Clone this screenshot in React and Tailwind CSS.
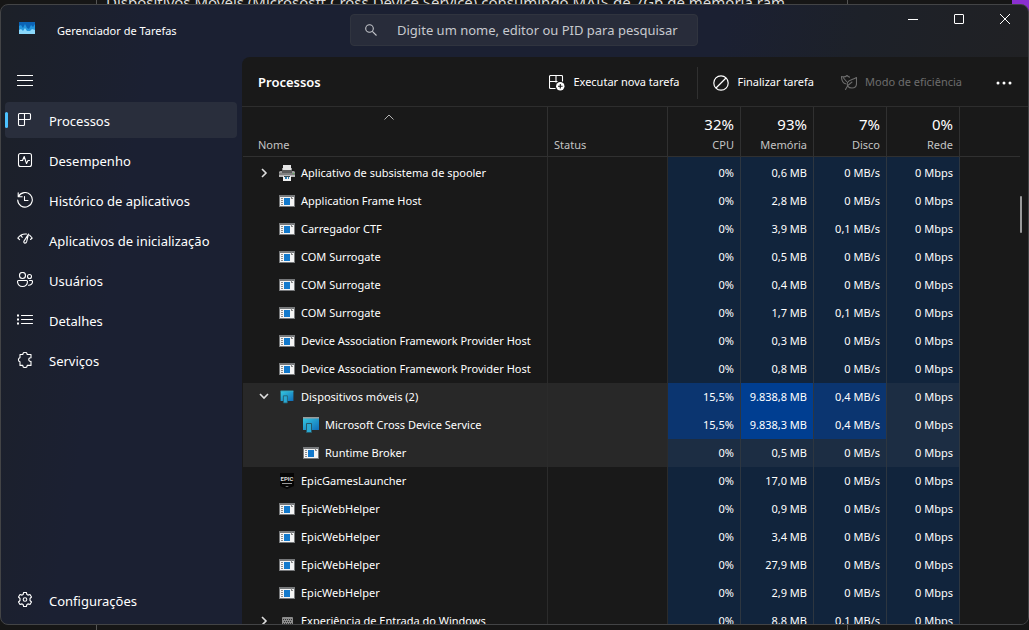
import React, { useState } from "react";

const heat = {
  idle: "bg-[#11243c]",
  idleHover: "bg-[#1c2d43]",
  mid: "bg-[#0b3570]",
  high: "bg-[#003e91]",
};

const initialProcesses = [
  { name: "Aplicativo de subsistema de spooler", icon: "printer", arrow: "right", cpu: "0%", memory: "0,6 MB", disk: "0 MB/s" },
  { name: "Application Frame Host", icon: "window", cpu: "0%", memory: "2,8 MB", disk: "0 MB/s" },
  { name: "Carregador CTF", icon: "window", cpu: "0%", memory: "3,9 MB", disk: "0,1 MB/s" },
  { name: "COM Surrogate", icon: "window", cpu: "0%", memory: "0,5 MB", disk: "0 MB/s" },
  { name: "COM Surrogate", icon: "window", cpu: "0%", memory: "0,4 MB", disk: "0 MB/s" },
  { name: "COM Surrogate", icon: "window", cpu: "0%", memory: "1,7 MB", disk: "0,1 MB/s" },
  { name: "Device Association Framework Provider Host", icon: "window", cpu: "0%", memory: "0,3 MB", disk: "0 MB/s" },
  { name: "Device Association Framework Provider Host", icon: "window", cpu: "0%", memory: "0,8 MB", disk: "0 MB/s" },
  { name: "Dispositivos móveis (2)", icon: "devicesSmall", arrow: "down", active: true, busy: true, cpu: "15,5%", memory: "9.838,8 MB", disk: "0,4 MB/s" },
  { name: "Microsoft Cross Device Service", icon: "devices", child: true, active: true, busy: true, cpu: "15,5%", memory: "9.838,3 MB", disk: "0,4 MB/s" },
  { name: "Runtime Broker", icon: "window", child: true, active: true, cpu: "0%", memory: "0,5 MB", disk: "0 MB/s" },
  { name: "EpicGamesLauncher", icon: "epic", cpu: "0%", memory: "17,0 MB", disk: "0 MB/s" },
  { name: "EpicWebHelper", icon: "window", cpu: "0%", memory: "0,9 MB", disk: "0 MB/s" },
  { name: "EpicWebHelper", icon: "window", cpu: "0%", memory: "3,4 MB", disk: "0 MB/s" },
  { name: "EpicWebHelper", icon: "window", cpu: "0%", memory: "27,9 MB", disk: "0 MB/s" },
  { name: "EpicWebHelper", icon: "window", cpu: "0%", memory: "2,9 MB", disk: "0 MB/s" },
  { name: "Experiência de Entrada do Windows", icon: "keyboard", arrow: "right", cpu: "0%", memory: "8,8 MB", disk: "0,1 MB/s" },
];

const columns = [
  { label: "CPU", total: "32%" },
  { label: "Memória", total: "93%" },
  { label: "Disco", total: "7%" },
  { label: "Rede", total: "0%" },
];

const LineIcon = ({ children }) => (
  <svg
    className="size-4 shrink-0"
    viewBox="0 0 16 16"
    fill="none"
    stroke="currentColor"
    strokeWidth="1.1"
    strokeLinecap="round"
    strokeLinejoin="round"
    aria-hidden="true"
  >
    {children}
  </svg>
);

const navItems = [
  {
    label: "Processos",
    icon: (
      <LineIcon>
        <path d="M2.5 1.5h10a1 1 0 0 1 1 1v4a1 1 0 0 1-1 1h-11v-5a1 1 0 0 1 1-1zM7.5 1.5v11a1 1 0 0 1-1 1h-4a1 1 0 0 1-1-1v-5" />
      </LineIcon>
    ),
  },
  {
    label: "Desempenho",
    icon: (
      <LineIcon>
        <rect x="1.5" y="1.5" width="13" height="13" rx="2" />
        <path d="M3.5 8.5h2l1.7-4 2.3 7 1.5-3h1.5" />
      </LineIcon>
    ),
  },
  {
    label: "Histórico de aplicativos",
    icon: (
      <LineIcon>
        <path d="M1.2 .8v4h4M1.5 4.5A7.3 7.3 0 1 1 .7 8M7.5 4.5v4H11" />
      </LineIcon>
    ),
  },
  {
    label: "Aplicativos de inicialização",
    icon: (
      <LineIcon>
        <path d="M.8 6a9.5 9.5 0 0 1 8.7-4M.8 6l1.8 1.6M3.8 3.1l1.4 2.2M12.6 3.2l2.6 2.8-1.7 1.5" />
        <path d="M11.5 2.1L7 9.1c-.6 1 .1 2 1 2s1.4-.5 1.6-1.2z" />
      </LineIcon>
    ),
  },
  {
    label: "Usuários",
    icon: (
      <LineIcon>
        <circle cx="5.5" cy="3.5" r="3" />
        <circle cx="12.5" cy="4.5" r="2" />
        <path d="M1.5 8.5h8a1 1 0 0 1 1 1c0 3-2 5-5 5s-5-2-5-5a1 1 0 0 1 1-1zM12.5 8.5h2a1 1 0 0 1 1 1c0 2.5-1.5 3.7-4 3.7" />
      </LineIcon>
    ),
  },
  {
    label: "Detalhes",
    icon: (
      <LineIcon>
        <path d="M4.5 3.5h11M4.5 7.5h11M4.5 11.5h11" />
        <path strokeWidth="1.8" strokeLinecap="butt" d="M0 3.5h2M0 7.5h2M0 11.5h2" />
      </LineIcon>
    ),
  },
  {
    label: "Serviços",
    icon: (
      <LineIcon>
        <path d="M3 2.5h2.8a2.2 2.2 0 0 1 4.4 0H14v3.3c-3-.4-3 4 0 3.6v4h-3.8a2.2 2.2 0 0 1-4.4 0H3V9.8a2.2 2.2 0 0 1 0-4.2z" />
      </LineIcon>
    ),
  },
];

const GearIcon = () => (
  <LineIcon>
    <circle cx="8" cy="7.5" r="1.8" />
    <path d="M6.6.5h2.8l.5 2 1.1.6 2-.6 1.5 2.5L13 6.5v2l1.5 1.5-1.5 2.500-2-.6-1.1.6-.5 2H6.6l-.5-2-1.1-.6-2 .6L1.5 10 3 8.5v-2L1.5 5 3 2.500l2 .6 1.1-.6z" />
  </LineIcon>
);

const ProcessIcon = ({ type }) => {
  if (type === "printer") {
    return (
      <svg className="size-4 shrink-0" viewBox="0 0 16 16" aria-hidden="true">
        <path fill="#e4e4e4" d="M4 0h8v5H4z" />
        <path fill="#9c9c9c" d="M1 6h2V3h1v3h8V3h1v3h2l1 1v5H0V7z" />
        <path fill="#5c5c5c" d="M3 5h10v3H3z" />
        <path fill="#808080" d="M0 8h16v2H0z" />
        <path fill="#b9b9b9" d="M0 10h16v2H0z" />
        <path fill="#f0f0f0" d="M4 11h8v5H4z" />
        <path fill="#2f7fae" d="M6 12h2v2H6zM9 12h1v2H9z" />
        <path fill="#3a4a52" d="M5 11h6v1H5z" />
        <path fill="#58c558" d="M14 8h1v1h-1z" />
      </svg>
    );
  }
  if (type === "devices" || type === "devicesSmall") {
    return (
      <svg className="size-4 shrink-0" viewBox={type === "devices" ? "0 0 16 16" : "-2 -2 20 20"} aria-hidden="true">
        <defs>
          <linearGradient id={type} x1="0" y1="0" x2="1" y2="1">
            <stop offset="0" stopColor="#35c8e0" />
            <stop offset="1" stopColor="#0f6cb8" />
          </linearGradient>
        </defs>
        <path fill={`url(#${type})`} d="M0 1h16v12H0z" />
        <path fill={type === "devices" ? "#9a9a9a" : "#35b8d8"} d="M0 0h16v1.5H0z" />
        <path fill="#2aa9d2" stroke="#275968" d="M3.5 6.5h5v9h-5z" />
      </svg>
    );
  }
  if (type === "epic") {
    return (
      <svg className="size-4 shrink-0" viewBox="0 0 16 16" aria-hidden="true">
        <path fill="#050505" d="M1 0h14v13l-7 3-7-3z" />
        <text x="8" y="8" textAnchor="middle" fill="#ddd" fontSize="6" fontWeight="700" fontFamily="Roboto, sans-serif">
          EPIC
        </text>
        <path fill="#999" d="M3 10h10v1H3zM6 13h4l-2 1z" />
      </svg>
    );
  }
  if (type === "keyboard") {
    return (
      <svg className="size-4 shrink-0" viewBox="0 0 16 16" aria-hidden="true">
        <rect x="3" y="4" width="11" height="8" rx="1" fill="#8c8c8c" />
        <path stroke="#333" strokeDasharray="1 1" d="M4 6.5h9M5 8.5h8M4 10.5h9" />
      </svg>
    );
  }
  return (
    <svg className="size-4 shrink-0" viewBox="0 0 16 16" shapeRendering="crispEdges" aria-hidden="true">
      <path fill="#77797b" d="M0 2h16v12H0z" />
      <path fill="#f4f4f4" d="M1 4h14v9H1z" />
      <path fill="#1279cc" d="M5 5h6v7H5z" />
      <path fill="#8b8b8b" d="M2 5h2v1H2zM2 7h2v1H2zM2 9h2v1H2zM2 11h2v1H2zM12 5h2v1h-2zM12 3h1v2h-1z" />
    </svg>
  );
};

const NavButton = ({ label, icon, selected, onClick }) => (
  <button
    className={`h-9 w-full flex items-center gap-4 pr-3 rounded text-[13px] text-left whitespace-nowrap ${
      selected ? "bg-[#292e3c]" : "hover:bg-white/5"
    }`}
    onClick={onClick}
  >
    <span className="flex items-center gap-[9px]">
      <span className={`w-[3px] h-4 rounded-full ${selected ? "bg-[#4cc2ff]" : ""}`} />
      {icon}
    </span>
    <span className="pt-1">{label}</span>
  </button>
);

const ProcessRow = ({ process, first }) => {
  const idle = process.active ? heat.idleHover : heat.idle;
  const mid = process.busy ? heat.mid : idle;
  const high = process.busy ? heat.high : idle;
  const pad = first ? "h-[30px] pt-0.5" : "h-7";
  const value = `${pad} pr-1.5 border-r border-[#2d3640] text-right`;

  return (
    <tr className="whitespace-nowrap">
      <td className={`${pad} border-r border-[#2b2b2b] ${process.active ? "bg-[#282828]" : ""}`}>
        <div className={`flex items-center ${process.child ? "pl-[60px]" : "pl-[15px]"}`}>
          {!process.child && (
            <span className="w-[21px] flex">
              {process.arrow && (
                <button aria-label={`Expandir ${process.name}`}>
                  <svg className="size-3" viewBox="0 0 12 12" fill="none" stroke="#dedede" strokeWidth="1.6">
                    <path d={process.arrow === "down" ? "M2 3l4 4 4-4" : "M4 2l4 4-4 4"} />
                  </svg>
                </button>
              )}
            </span>
          )}
          <ProcessIcon type={process.icon} />
          <span className="pl-1.5">{process.name}</span>
        </div>
      </td>
      <td className={`border-r border-[#2b2b2b] ${process.active ? "bg-[#282828]" : ""}`}></td>
      <td className={`${value} ${mid}`}>{process.cpu}</td>
      <td className={`${value} ${high}`}>{process.memory}</td>
      <td className={`${value} ${mid}`}>{process.disk}</td>
      <td className={`${value} ${idle}`}>0 Mbps</td>
      <td></td>
    </tr>
  );
};

const App = () => {
  const [selected, setSelected] = useState("Processos");
  const [search, setSearch] = useState("");

  const term = search.toLowerCase();
  const processes = initialProcesses.filter((p) => p.name.toLowerCase().includes(term));

  return (
    <div className="relative h-screen overflow-hidden bg-[#161616] text-white font-['Noto_Sans','Open_Sans',sans-serif]">
      {/* Page behind the window */}
      <div className="absolute inset-0 flex">
        <div className="w-[97px] border-r border-[#555]" />
        <div className="w-[751px] border-r border-[#555] pl-[9px]">
          <p className="-mt-2 text-[15px] leading-5 whitespace-nowrap text-[#ddd]">
            Dispositivos Móveis (Micrososft Cross Device Service) consumindo MAIS de 7Gb de memoria ram
          </p>
        </div>
        <div className="ml-auto w-[17px] h-3 bg-[#8a2fd0]" />
      </div>

      {/* Task manager window */}
      <div className="relative h-full pt-1 pb-[5px]">
        <div className="h-full flex flex-col overflow-hidden rounded-lg border border-[#434446] bg-[linear-gradient(100deg,#1c2028,#1b2032_14%,#1b2032_64%,#1d2129_76%,#212123_94%)]">
          <header className="h-[52px] shrink-0 flex items-center">
            <div className="w-[349px] shrink-0 flex items-center pl-[18px] gap-[22px]">
              <svg className="w-4 h-3 mb-1.5" viewBox="0 0 16 12" aria-hidden="true">
                <path fill="#0b63b5" d="M0 0h16v12H0z" />
                <path fill="#2496dd" d="M0 4l2-1 2 3 2-4 2 4 2 1 2-4 2 2 2-3v10H0z" />
                <path fill="#8bd8fb" d="M0 8l2-1 2 2 2-3 2 3 3 0 2-2 3 1v4H0z" />
              </svg>
              <h1 className="text-[11px]">Gerenciador de Tarefas</h1>
            </div>
            <label className="w-[348px] h-8 mb-0.5 flex items-center gap-[19px] px-[13px] rounded border border-[#30343f] bg-[#282c3a]">
              <svg className="size-3.5 shrink-0" viewBox="0 0 14 14" fill="none" stroke="#c4c6cb" strokeWidth="1.1">
                <circle cx="5.5" cy="5.5" r="3.8" />
                <path d="M8.3 8.3l4.2 4.2" />
              </svg>
              <input
                className="flex-1 min-w-0 pt-px bg-transparent outline-none text-[13px] placeholder:text-[#c7c9ce]"
                placeholder="Digite um nome, editor ou PID para pesquisar"
                aria-label="Pesquisar"
                value={search}
                onChange={(e) => setSearch(e.target.value)}
              />
            </label>
            <div className="ml-auto self-start flex">
              <button className="w-[46px] h-7 flex items-center justify-center" aria-label="Minimizar">
                <svg className="size-3" viewBox="0 0 12 12" stroke="#fff">
                  <path d="M1 6.5h10" />
                </svg>
              </button>
              <button className="w-[46px] h-7 flex items-center justify-center" aria-label="Maximizar">
                <svg className="size-3" viewBox="0 0 12 12" fill="none" stroke="#fff">
                  <rect x="1.5" y="1.5" width="9" height="9" rx=".5" />
                </svg>
              </button>
              <button className="w-[46px] h-7 flex items-center justify-center" aria-label="Fechar">
                <svg className="size-3" viewBox="0 0 12 12" stroke="#fff">
                  <path d="M1 1l10 10M11 1L1 11" />
                </svg>
              </button>
            </div>
          </header>

          <div className="flex-1 min-h-0 flex">
            <nav className="w-[241px] shrink-0 flex flex-col gap-1 pl-1 pr-[5px] pt-[5px] pb-1.5">
              <button className="h-9 w-10 flex items-center px-3" aria-label="Abrir navegação">
                <LineIcon>
                  <path strokeLinecap="butt" d="M0 3.5h16M0 8.5h16M0 13.5h16" />
                </LineIcon>
              </button>
              {navItems.map((item) => (
                <NavButton
                  key={item.label}
                  label={item.label}
                  icon={item.icon}
                  selected={selected === item.label}
                  onClick={() => setSelected(item.label)}
                />
              ))}
              <div className="mt-auto">
                <NavButton
                  label="Configurações"
                  icon={<GearIcon />}
                  selected={selected === "Configurações"}
                  onClick={() => setSelected("Configurações")}
                />
              </div>
            </nav>

            <main className="flex-1 min-w-0 flex flex-col rounded-tl-lg bg-[#191919]">
              {/* Toolbar */}
              <div className="h-[50px] shrink-0 flex items-center pl-4 pt-0.5 border-b border-[#2d2d2d] text-[11px] whitespace-nowrap">
                <h2 className="text-[13px] font-semibold">Processos</h2>
                <button className="ml-auto h-8 flex items-center gap-2 px-3">
                  <svg className="size-4" viewBox="0 0 16 16" fill="none" stroke="#fff" strokeWidth="1.1">
                    <path d="M6.5 13.5h-5a1 1 0 0 1-1-1v-11a1 1 0 0 1 1-1h11a1 1 0 0 1 1 1v5M.5 6.5h8M7 .5v7" />
                    <circle cx="11.3" cy="11.3" r="4.2" fill="#fff" stroke="none" />
                    <path stroke="#191919" d="M11.3 9v4.6M9 11.3h4.6" />
                  </svg>
                  Executar nova tarefa
                </button>
                <div className="ml-1.5 mr-[3px] w-px h-8 bg-[#303030]" />
                <button className="h-8 flex items-center gap-2 px-3">
                  <svg className="size-4" viewBox="0 0 16 16" fill="none" stroke="#fff" strokeWidth="1.2">
                    <circle cx="8" cy="8" r="7.2" />
                    <path d="M3 13L13 3" />
                  </svg>
                  Finalizar tarefa
                </button>
                <button className="h-8 ml-[3px] flex items-center gap-2 px-3 text-[#6d6d6d]" disabled>
                  <LineIcon>
                    <path d="M4.500 8.800C1.500 8 .5 6 .5 1.500c2 .7 4 .5 5.500-1 .9.9 1.800 1.400 2.500 1.600M2.500 3l3 3.500" />
                    <path d="M15.500 2.500v6c0 3-1.500 4.500-4.500 4.500-4 0-5.500-2.500-4.500-5.500 1.500-3 5-2.500 9-5zM4.500 14.500c1.500-3.500 4-6 6.500-7.500" />
                  </LineIcon>
                  Modo de eficiência
                </button>
                <button className="h-8 ml-1.5 flex items-center px-4" aria-label="Mais opções">
                  <svg className="size-4" viewBox="0 0 16 16" fill="#fff">
                    <circle cx="2" cy="8" r="1.5" />
                    <circle cx="8" cy="8" r="1.5" />
                    <circle cx="14" cy="8" r="1.5" />
                  </svg>
                </button>
              </div>

              <div className="flex-1 min-h-0 flex overflow-hidden pl-px">
                <div className="flex-1 min-w-0">
                  <table className="w-full table-fixed border-separate border-spacing-0 text-[11px] leading-4">
                    <thead>
                      <tr className="text-[#c4c4c4]">
                        <th className="w-[305px] h-[50px] border-r border-b border-[#303030] pl-[15px] pr-[27px] pb-[3px] align-bottom text-left font-normal">
                          <svg className="w-2.5 h-1.5 mx-auto mb-[17px]" viewBox="0 0 10 6" fill="none" stroke="#b5b5b5">
                            <path d="M.5 5.5L5 1l4.5 4.5" />
                          </svg>
                          Nome
                        </th>
                        <th className="w-[120px] border-r border-b border-[#303030] pl-1.5 pb-[3px] align-bottom text-left font-normal">
                          Status
                        </th>
                        {columns.map((col) => (
                          <th
                            key={col.label}
                            className="w-[73px] border-r border-b border-[#303030] pr-1.5 pb-[3px] align-bottom text-right font-normal"
                          >
                            <div className="mb-[3px] text-[15px] leading-5 text-white">{col.total}</div>
                            {col.label}
                          </th>
                        ))}
                        <th className="border-b border-[#303030]"></th>
                      </tr>
                    </thead>
                    <tbody>
                      {processes.map((process, i) => (
                        <ProcessRow key={i} process={process} first={i === 0} />
                      ))}
                    </tbody>
                  </table>
                </div>
                {/* Scrollbar */}
                <div className="w-2 shrink-0">
                  <div className="w-0.5 h-[37px] mt-[89px] rounded-full bg-[#9a9a9a]" />
                </div>
              </div>
            </main>
          </div>
        </div>
      </div>
    </div>
  );
};

export default App;
